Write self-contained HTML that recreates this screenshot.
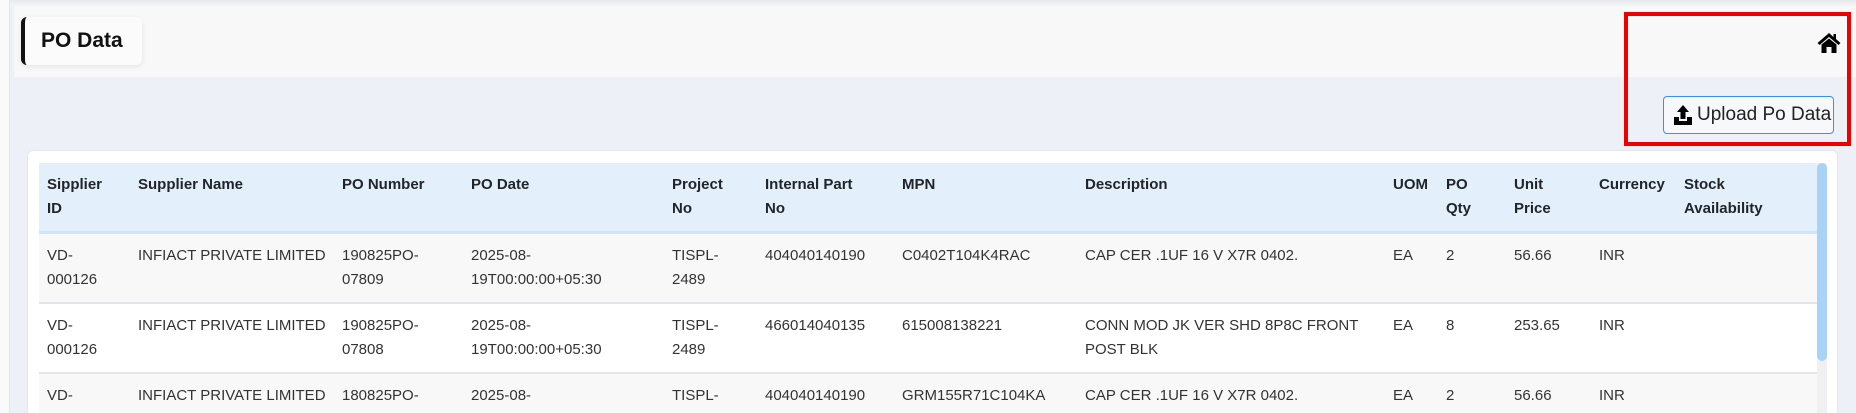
<!DOCTYPE html>
<html style="width:1856px;height:413px;overflow:hidden"><head><meta charset="utf-8"><style>
*{box-sizing:border-box;margin:0;padding:0}
body{width:1856px;height:413px;overflow:hidden;background:#edf0f6;font-family:"Liberation Sans",sans-serif;color:#212529}
#w{position:relative;width:1856px;height:413px;overflow:hidden}
.side{position:absolute;left:0;top:0;width:10px;height:413px;background:#fafafa;border-right:1px solid #e2e5ea}
.topsh{position:absolute;left:0;top:0;width:1856px;height:6px;background:linear-gradient(#e6e8ec,#f4f5f7)}
.hdr{position:absolute;left:14px;top:6px;width:1842px;height:71px;background:#f8f8f8}
.title{position:absolute;left:21px;top:17px;width:121px;height:48px;background:#fbfbfc;border-left:4px solid #111;border-radius:6px;box-shadow:0 2px 6px rgba(0,0,0,.08);font-size:21px;font-weight:bold;line-height:48px;padding-left:16px;color:#111}
.home{position:absolute;left:1817px;top:32px}
.red{position:absolute;left:1624px;top:12px;width:227px;height:134px;border:4px solid #ee0000}
.btn{position:absolute;left:1663px;top:96px;width:171px;height:38px;border:1.5px solid #3b8ff0;border-radius:4px;background:#f6f8fc;font-size:19px;line-height:35px;padding-left:33px;color:#222}
.btn svg{position:absolute;left:9px;top:8px}
.card{position:absolute;left:27px;top:150px;width:1811px;height:263px;background:#fff;border-radius:6px 6px 0 0;border:1px solid #e4e7ec;border-bottom:none}
.tw{position:absolute;left:39px;top:163px;width:1778px;height:250px;overflow:hidden}
table{width:1778px;border-collapse:collapse;table-layout:fixed;font-size:15px;line-height:24px}
th{background:#e3f0fc;text-align:left;font-weight:bold;vertical-align:top;padding:10px 8px;height:69px;border-bottom:3px solid #cfe5fb}
td{vertical-align:top;padding:10px 8px;height:68px;border-bottom:2px solid #e3e5e8;color:#333}
tr.s td{background:#f8f8f8}
.sb{position:absolute;left:1817px;top:163px;width:10px;height:198px;background:#a8d3f7;border-radius:5px}
.sbt{position:absolute;left:1817px;top:163px;width:10px;height:250px;background:#f0f0f0}
</style></head><body><div id="w">
<div class="topsh"></div>
<div class="side"></div>
<div class="hdr"></div>
<div class="title">PO Data</div>
<svg class="home" width="24" height="22" viewBox="0 0 24 22"><path d="M12 1 L0.5 11 L2.5 13 L12 5 L21.5 13 L23.5 11 L19 7 V2 H16.5 V5 Z" fill="#000"/><path d="M4.5 12.5 L12 6.5 L19.5 12.5 V21 H14.5 V15 H9.5 V21 H4.5 Z" fill="#000"/></svg>
<div class="red"></div>
<div class="btn"><svg width="20" height="20" viewBox="0 0 20 20"><path d="M10 0 L16 7 H12.5 V14 H7.5 V7 H4 Z" fill="#000"/><path d="M1 12 H6 V16 H14 V12 H19 V20 H1 Z" fill="#000"/></svg>Upload Po Data</div>
<div class="card"></div>
<div class="sbt"></div>
<div class="tw"><table>
<colgroup><col style="width:91px"><col style="width:204px"><col style="width:129px"><col style="width:201px"><col style="width:93px"><col style="width:137px"><col style="width:183px"><col style="width:308px"><col style="width:53px"><col style="width:68px"><col style="width:85px"><col style="width:85px"><col style="width:141px"></colgroup>
<tr><th>Sipplier<br>ID</th><th>Supplier Name</th><th>PO Number</th><th>PO Date</th><th>Project<br>No</th><th>Internal Part<br>No</th><th>MPN</th><th>Description</th><th>UOM</th><th>PO<br>Qty</th><th>Unit<br>Price</th><th>Currency</th><th>Stock<br>Availability</th></tr>
<tr class="s"><td>VD-<br>000126</td><td>INFIACT PRIVATE LIMITED</td><td>190825PO-<br>07809</td><td>2025-08-<br>19T00:00:00+05:30</td><td>TISPL-<br>2489</td><td>404040140190</td><td>C0402T104K4RAC</td><td>CAP CER .1UF 16 V X7R 0402.</td><td>EA</td><td>2</td><td>56.66</td><td>INR</td><td></td></tr>
<tr><td>VD-<br>000126</td><td>INFIACT PRIVATE LIMITED</td><td>190825PO-<br>07808</td><td>2025-08-<br>19T00:00:00+05:30</td><td>TISPL-<br>2489</td><td>466014040135</td><td>615008138221</td><td>CONN MOD JK VER SHD 8P8C FRONT<br>POST BLK</td><td>EA</td><td>8</td><td>253.65</td><td>INR</td><td></td></tr>
<tr class="s"><td>VD-<br>000126</td><td>INFIACT PRIVATE LIMITED</td><td>180825PO-<br>07804</td><td>2025-08-<br>18T00:00:00+05:30</td><td>TISPL-<br>2489</td><td>404040140190</td><td>GRM155R71C104KA<br>88D</td><td>CAP CER .1UF 16 V X7R 0402.</td><td>EA</td><td>2</td><td>56.66</td><td>INR</td><td></td></tr>
</table></div>
<div class="sb"></div>
</div></body></html>
